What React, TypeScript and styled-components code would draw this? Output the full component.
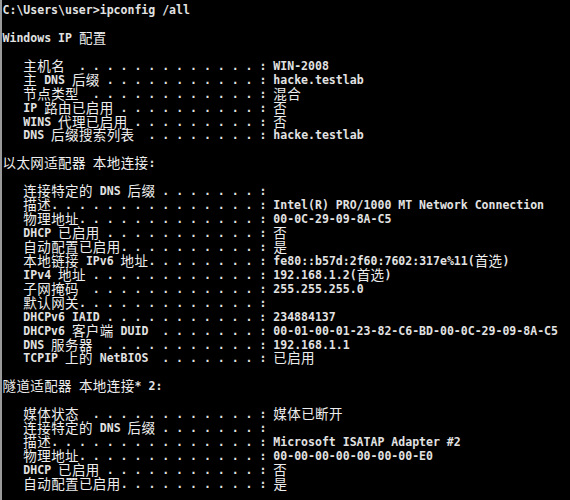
import React from 'react';
import styled, { createGlobalStyle } from 'styled-components';

const GlobalStyle = createGlobalStyle`
  html, body {
    margin: 0;
    padding: 0;
    background: #000;
  }
  body {
    width: 570px;
    height: 500px;
    overflow: hidden;
  }
`;

const Console = styled.div`
  box-sizing: border-box;
  width: 570px;
  height: 500px;
  background: #000;
  border-left: 2px solid #9a9a9a;
  padding: 4px 0 0 0.5px;
  color: #e2e2e2;
  font-family: "DejaVu Sans Mono", "Liberation Mono", monospace;
  font-weight: 700;
  font-size: 11.545px;
  overflow: hidden;
`;

const Line = styled.div`
  height: 13.94px;
  line-height: 13.94px;
  white-space: pre;
`;

const Wide = styled.span`
  font-family: "Noto Sans CJK SC", sans-serif;
  font-weight: 400;
  font-size: 13.5px;
  letter-spacing: 0.4px;
  line-height: 10px;
  vertical-align: -1px;
  color: #eeeeee;
`;

const isWide = (ch: string) => /[\u2e80-\u9fff\uff00-\uffef]/.test(ch);

const width = (s: string) =>
  Array.from(s).reduce((n, ch) => n + (isWide(ch) ? 2 : 1), 0);

const entry = (label: string, firstDot: number, value = '') => {
  let s = '   ' + label;
  let col = 3 + width(label);
  while (col < firstDot) {
    s += ' ';
    col++;
  }
  while (col < 37) {
    s += col % 2 === 1 ? '.' : ' ';
    col++;
  }
  return s + ': ' + value;
};

const lines: string[] = [
  'C:\\Users\\user>ipconfig /all',
  '',
  'Windows IP 配置',
  '',
  entry('主机名', 11, 'WIN-2008'),
  entry('主 DNS 后缀', 15, 'hacke.testlab'),
  entry('节点类型', 13, '混合'),
  entry('IP 路由已启用', 17, '否'),
  entry('WINS 代理已启用', 19, '否'),
  entry('DNS 后缀搜索列表', 21, 'hacke.testlab'),
  '',
  '以太网适配器 本地连接:',
  '',
  entry('连接特定的 DNS 后缀', 23),
  entry('描述', 7, 'Intel(R) PRO/1000 MT Network Connection'),
  entry('物理地址', 11, '00-0C-29-09-8A-C5'),
  entry('DHCP 已启用', 15, '否'),
  entry('自动配置已启用', 17, '是'),
  entry('本地链接 IPv6 地址', 21, 'fe80::b57d:2f60:7602:317e%11(首选)'),
  entry('IPv4 地址', 13, '192.168.1.2(首选)'),
  entry('子网掩码', 13, '255.255.255.0'),
  entry('默认网关', 11),
  entry('DHCPv6 IAID', 15, '234884137'),
  entry('DHCPv6 客户端 DUID', 23, '00-01-00-01-23-82-C6-BD-00-0C-29-09-8A-C5'),
  entry('DNS 服务器', 15, '192.168.1.1'),
  entry('TCPIP 上的 NetBIOS', 23, '已启用'),
  '',
  '隧道适配器 本地连接* 2:',
  '',
  entry('媒体状态', 13, '媒体已断开'),
  entry('连接特定的 DNS 后缀', 23),
  entry('描述', 7, 'Microsoft ISATAP Adapter #2'),
  entry('物理地址', 11, '00-00-00-00-00-00-00-E0'),
  entry('DHCP 已启用', 15, '否'),
  entry('自动配置已启用', 17, '是'),
];

const renderRuns = (text: string) => {
  const parts = text.split(/([\u2e80-\u9fff\uff00-\uffef]+)/);
  return parts.map((p, i) =>
    p === '' ? null : isWide(p[0]) ? <Wide key={i}>{p}</Wide> : <React.Fragment key={i}>{p}</React.Fragment>
  );
};

export default function App() {
  return (
    <>
      <GlobalStyle />
      <Console>
        {lines.map((l, i) => (
          <Line key={i}>{l === '' ? ' ' : renderRuns(l)}</Line>
        ))}
      </Console>
    </>
  );
}
